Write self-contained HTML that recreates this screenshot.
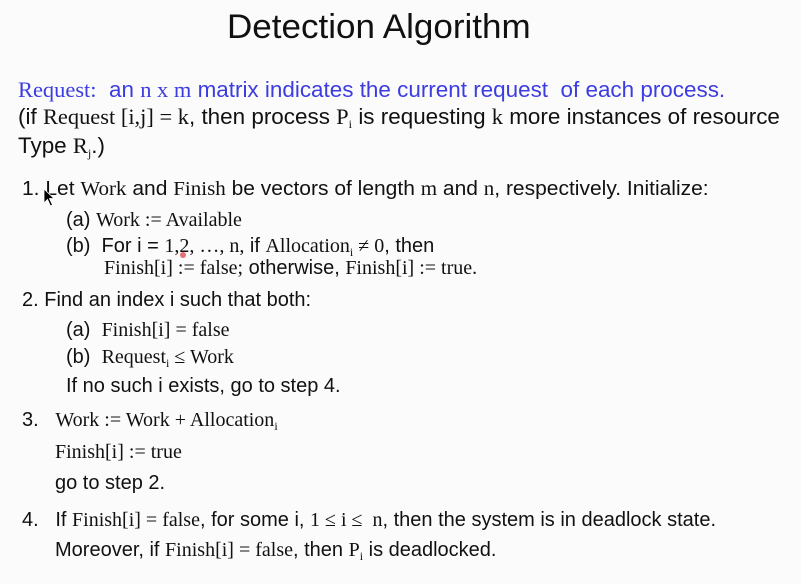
<!DOCTYPE html>
<html><head><meta charset="utf-8"><style>
html,body{margin:0;padding:0;background:#fbfbfb;width:801px;height:584px;overflow:hidden}
.l{position:absolute;white-space:nowrap;font-family:"Liberation Sans",sans-serif;font-size:20px;line-height:24px;color:#111;transform-origin:left center;transform:scaleX(1.0)}
.s{font-family:"Liberation Serif",serif}
sub{font-size:12px;vertical-align:-4px;line-height:0}
.b{color:#3c3ce0}
.big{font-size:22px;transform:scaleX(1.02)}
</style></head><body>
<div class="l" style="left:227px;top:7px;font-size:34px;line-height:40px;transform:scaleX(1.03)">Detection Algorithm</div>
<div class="l b big" style="left:18px;top:78px"><span class="s">Request:</span>&nbsp; an <span class="s">n x m</span> matrix indicates the current request &nbsp;of each process.</div>
<div class="l big" style="left:18px;top:105px">(if <span class="s">Request [i,j] = k</span>, then process <span class="s">P<sub>i</sub></span> is requesting <span class="s">k</span> more instances of resource</div>
<div class="l big" style="left:18px;top:134px">Type <span class="s">R<sub>j</sub></span>.)</div>
<div class="l" style="left:22px;top:177px;transform:scaleX(1.05)">1. Let <span class="s">Work</span> and <span class="s">Finish</span> be vectors of length <span class="s">m</span> and <span class="s">n</span>, respectively. Initialize:</div>
<div class="l" style="left:66px;top:208px">(a) <span class="s">Work := Available</span></div>
<div class="l" style="left:66px;top:234px">(b) &nbsp;For i = <span class="s">1,2, …, n,</span> if <span class="s">Allocation<sub>i</sub> ≠ 0</span>, then</div>
<div class="l" style="left:104px;top:256px"><span class="s">Finish[i] := false;</span> otherwise, <span class="s">Finish[i] := true.</span></div>
<div class="l" style="left:22px;top:288px">2. Find an index i such that both:</div>
<div class="l" style="left:66px;top:318px">(a) &nbsp;<span class="s">Finish[i] = false</span></div>
<div class="l" style="left:66px;top:345px">(b) &nbsp;<span class="s">Request<sub>i</sub> ≤ Work</span></div>
<div class="l" style="left:66px;top:374px">If no such i exists, go to step 4.</div>
<div class="l" style="left:22px;top:408px">3. &nbsp;&nbsp;<span class="s">Work := Work + Allocation<sub>i</sub></span></div>
<div class="l" style="left:55px;top:440px"><span class="s">Finish[i] := true</span></div>
<div class="l" style="left:55px;top:471px">go to step 2.</div>
<div class="l" style="left:22px;top:508px">4. &nbsp;&nbsp;If <span class="s">Finish[i] = false</span>, for some i, <span class="s">1 ≤ i ≤ &nbsp;n</span>, then the system is in deadlock state.</div>
<div class="l" style="left:55px;top:538px">Moreover, if <span class="s">Finish[i] = false</span>, then <span class="s">P<sub>i</sub></span> is deadlocked.</div>
<svg style="position:absolute;left:43px;top:188px" width="14" height="20" viewBox="0 0 14 20"><path d="M1 1 L1 15 L4.5 11.5 L7.5 18 L9.5 17 L6.5 10.5 L11 10.5 Z" fill="#000" stroke="#fff" stroke-width="0.8"/></svg>
<div style="position:absolute;left:180px;top:252px;width:6px;height:6px;border-radius:3px;background:#e05050;opacity:.8"></div>
</body></html>
